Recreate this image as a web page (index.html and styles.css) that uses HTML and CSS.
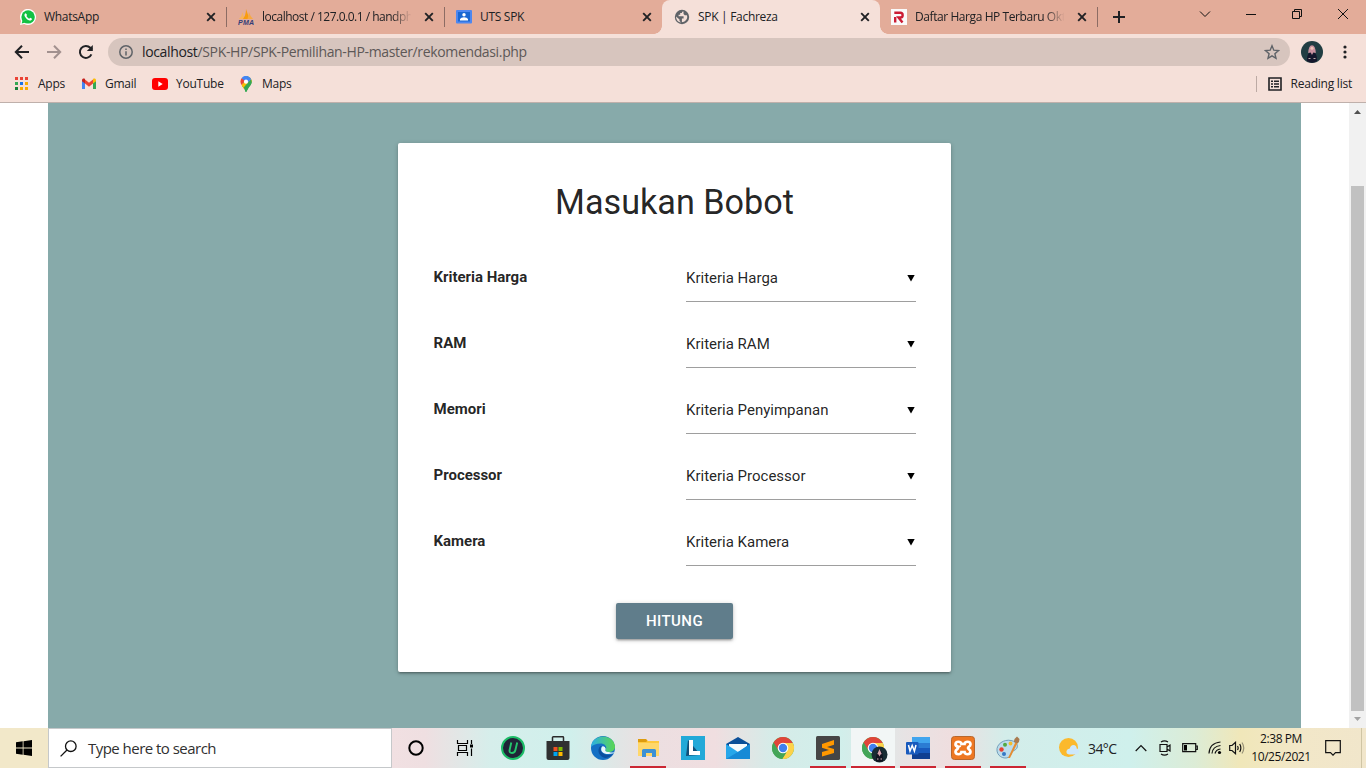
FILE: index.html
```html
<!DOCTYPE html>
<html lang="id">
<head>
<meta charset="utf-8">
<title>SPK | Fachreza</title>
<link rel="stylesheet" href="styles.css">
</head>
<body>
<svg class="defs" width="0" height="0" aria-hidden="true">
  <symbol id="close" viewBox="0 0 16 16"><path d="M4.2 4.2l7.6 7.6M11.8 4.2l-7.6 7.6" stroke="#202124" stroke-width="1.9" fill="none"/></symbol>
  <symbol id="chrome" viewBox="0 0 24 24">
    <circle cx="12" cy="12" r="11" fill="#4caf50"/>
    <path d="M2.5 6.5A11 11 0 0 1 21.5 6.5V7H12L7.4 14.6z" fill="#e0453a"/>
    <path d="M12 7h9.8A11 11 0 0 1 11.2 23l5.2-8.5z" fill="#fdd24a"/>
    <path d="M2.5 6.5l4.9 8.2L12 17h3L11.200 23A11 11 0 0 1 2.5 6.5z" fill="#43a558"/>
    <circle cx="12" cy="12" r="5.3" fill="#fff"/><circle cx="12" cy="12" r="4.2" fill="#3f80ee"/>
  </symbol>
</svg>
<div class="screen">
  <header class="tabstrip">
    <div class="tab divided">
      <svg class="fav" viewBox="0 0 16 16"><path d="M0 16l1.1-4A8 8 0 1 1 4.2 15z" fill="#fff"/><circle cx="8.1" cy="7.9" r="6.7" fill="#12c143"/><path d="M1.7 14.4l1-3.8 2.7 2.8z" fill="#12c143"/><path d="M5.8 4.3c-1.6.5-1.7 2-.8 3.5 1.1 1.900 2.700 3.200 4.500 3.700 1.300.3 2.400-.3 2.500-1.700L10.200 8.800l-1 1C8 9.300 6.900 8.200 6.400 7.100l.7-1z" fill="#fff"/></svg>
      <span class="title">WhatsApp</span><svg class="x"><use href="#close"/></svg>
    </div>
    <div class="tab divided">
      <svg class="fav" viewBox="0 0 16 16"><path d="M1 10Q4 7 4.500 3L6.500 10z" fill="#f7b35c"/><path d="M5 10Q8 6 8 0l3.500 10z" fill="#f89c0e"/><path d="M9.500 10L11 3q1 4 4 7z" fill="#f6a942"/><text x="0" y="15.500" class="pma" textLength="16">PMA</text></svg>
      <span class="title faded">localhost / 127.0.0.1 / handph</span><svg class="x"><use href="#close"/></svg>
    </div>
    <div class="tab">
      <svg class="fav" viewBox="0 0 16 16"><rect y="1" width="16" height="13.500" rx="1" fill="#4d87f0"/><rect x="2" y="3" width="12" height="9.500" fill="#1967d2"/><circle cx="8" cy="5.700" r="1.700" fill="#fff"/><path d="M4 11.500V10q1-1.700 4-1.700T12 10v1.500z" fill="#fff"/></svg>
      <span class="title">UTS SPK</span><svg class="x"><use href="#close"/></svg>
    </div>
    <div class="tab active">
      <svg class="fav" viewBox="0 0 16 16"><circle cx="8" cy="8" r="7.200" fill="#5f6368"/><path d="M9.500 2.500c-1.300 0-1.600.7-1.600 1.500H6.200v1.700H4.600v1.600h5v2.300h-1.700v3.600c2.800-.1 5.300-2.500 5.300-5.200 0-.6-.1-1.200-.3-1.700h-2.100l-1.300-1.200zM2 7.500l3.500 3v1.600l1.700 1.500C4 13.200 2 11 2 7.500z" fill="#f5e0d9"/></svg>
      <span class="title">SPK | Fachreza</span><svg class="x"><use href="#close"/></svg>
    </div>
    <div class="tab last divided">
      <svg class="fav" viewBox="0 0 16 16"><rect width="16" height="16" fill="#fafafa"/><path d="M4.200 13.500V8M3.300 3.800h6a2 2 0 0 1 0 4.700H7.500l4 5" stroke="#cc1c34" stroke-width="2.400" fill="none"/></svg>
      <span class="title faded">Daftar Harga HP Terbaru Okt</span><svg class="x"><use href="#close"/></svg>
    </div>
    <svg class="plus" viewBox="0 0 12 12"><path d="M6 0v12M0 6h12" stroke="#202124" stroke-width="2"/></svg>
    <div class="caption">
      <svg viewBox="0 0 12 12"><path d="M1 3.500l5 5 5-5" /></svg>
      <svg viewBox="0 0 12 12"><path d="M1 6.500h10"/></svg>
      <svg viewBox="0 0 12 12"><path d="M1.500 3.500h7v7h-7zM3.500 3.500v-2h7v7h-2"/></svg>
      <svg viewBox="0 0 12 12"><path d="M1 1l10 10M11 1L1 11"/></svg>
    </div>
  </header>

  <div class="toolbar">
    <svg class="nav" viewBox="0 0 16 16"><path d="M15 8H2M8 1.800L1.800 8 8 14.200" stroke="#202124"/></svg>
    <svg class="nav" viewBox="0 0 16 16"><path d="M1 8h13M8 1.800L14.200 8 8 14.200" stroke="#a2918f"/></svg>
    <svg class="nav" viewBox="0 0 16 16"><path d="M13.400 10.300A6 6 0 1 1 12.300 3.800L14 5.500" stroke="#202124"/><path d="M14.800 1v6h-6z" fill="#202124" stroke="none"/></svg>
    <div class="omnibox">
      <svg class="info" viewBox="0 0 14 14"><circle cx="7" cy="7" r="6.200"/><path d="M7 6.200v4.300M7 3.400v1.500"/></svg>
      <span class="url"><b>localhost</b>/SPK-HP/SPK-Pemilihan-HP-master/rekomendasi.php</span>
      <svg class="star" viewBox="0 0 16 16"><path d="M8 1.800l1.800 4.400 4.700.4-3.600 3.100 1.100 4.600L8 11.900l-4 2.400 1.100-4.600L1.500 6.600l4.700-.4z"/></svg>
    </div>
    <svg class="avatar" viewBox="0 0 22 22"><circle cx="11" cy="11" r="11" fill="#213d42"/><path d="M6 20q-.5-9 5-9t5 9q-5 3.500-10 0z" fill="#14162b"/><path d="M7.200 12q.3-7.500 3.800-7.800 3.500.3 3.800 7.800l-2.500-.5-1.300 2.500-1.300-2.500z" fill="#c9929f"/><circle cx="11" cy="7.300" r="1.500" fill="#efc5b7"/><path d="M7.500 17.500h2m3 0h2" stroke="#bda9a5"/></svg>
    <svg class="dots" viewBox="0 0 4 14"><circle cx="2" cy="2" r="1.600"/><circle cx="2" cy="7" r="1.600"/><circle cx="2" cy="12" r="1.600"/></svg>
  </div>

  <nav class="bookmarks">
    <svg class="apps" viewBox="0 0 13 13"><path d="M0 0h3v3H0zM5 0h3v3H5zM10 0h3v3h-3z" fill="#ea4335"/><path d="M0 5h3v3H0z" fill="#34a853"/><path d="M5 5h3v3H5z" fill="#1a73e8"/><path d="M10 5h3v3h-3zM5 10h3v3H5zM10 10h3v3h-3z" fill="#f9ab00"/><path d="M0 10h3v3H0z" fill="#188038"/></svg>
    <span class="bm-apps">Apps</span>
    <svg class="gmail" viewBox="0 0 14 12"><path d="M0 2.500V11h3V5z" fill="#4285f4"/><path d="M14 2.500V11h-3V5z" fill="#34a853"/><path d="M3 1.500L7 4.700l4-3.200v4L7 8.700 3 5.500z" fill="#ea4335"/><path d="M0 2.500C0 .5 1.800 0 3 1v4.500L0 3.300z" fill="#c5221f"/><path d="M14 2.500C14 .5 12.200 0 11 1v4.500l3-2.200z" fill="#fbbc04"/></svg>
    <span class="bm-gmail">Gmail</span>
    <svg class="yt" viewBox="0 0 16 12"><rect width="16" height="12" rx="3" fill="#f00"/><path d="M6.300 3.300v5.400L10.700 6z" fill="#fff"/></svg>
    <span class="bm-yt">YouTube</span>
    <svg class="maps" viewBox="0 0 12 16"><path d="M6 0a5.700 5.700 0 0 1 5.700 5.700C11.700 9 8 10.500 6.700 15.300q-.7 1.400-1.400 0C4.700 12.500 2 10 2 10z" fill="#34a853"/><path d="M1.500 9L8.700 1Q11.700 2.500 11.700 5.700L4 13z" fill="#fbbc04"/><path d="M6.300 8.500l4.600-5.300c1.600 3.300.3 5.400-1.900 8.100L6.700 15.300q-.7 1.400-1.400 0Q5 13 3.700 11.500z" fill="#34a853"/><path d="M1.500 2.200A5.700 5.700 0 0 1 8.700.7L4.500 6z" fill="#4285f4"/><path d="M8.700.7Q10.500 1.500 11.100 3.200L8 6.500 5.500 3.500z" fill="#4285f4"/><path d="M1.500 2.200L5 5.100 1.500 9Q-.6 5.500 1.500 2.200z" fill="#ea4335"/><circle cx="6" cy="5.700" r="2.100" fill="#fff"/></svg>
    <span class="bm-maps">Maps</span>
    <div class="reading">
      <svg viewBox="0 0 14 14"><path d="M1 1h12v12H1z" fill="none" stroke="#202124" stroke-width="1.600"/><path d="M3 4.200h2m1 0h5M3 7h2m1 0h5M3 9.800h2m1 0h5" stroke="#202124" stroke-width="1.500"/></svg>
      <span>Reading list</span>
    </div>
  </nav>

  <main class="viewport">
    <div class="page">
      <form class="card">
        <h4>Masukan Bobot</h4>
        <div class="row"><label>Kriteria Harga</label><div class="select"><span>Kriteria Harga</span><i></i></div></div>
        <div class="row"><label>RAM</label><div class="select"><span>Kriteria RAM</span><i></i></div></div>
        <div class="row"><label>Memori</label><div class="select"><span>Kriteria Penyimpanan</span><i></i></div></div>
        <div class="row"><label>Processor</label><div class="select"><span>Kriteria Processor</span><i></i></div></div>
        <div class="row"><label>Kamera</label><div class="select"><span>Kriteria Kamera</span><i></i></div></div>
        <button class="btn" type="button">HITUNG</button>
      </form>
    </div>
    <div class="scrollbar"><i class="up"></i><div class="thumb"></div><i class="down"></i></div>
  </main>

  <footer class="taskbar">
    <div class="start"><svg viewBox="0 0 16 16"><path d="M0 2.300L6.700 1.300V7.600H0zM7.500 1.200L16 0v7.600H7.500zM0 8.400h6.700v6.300L0 13.700zM7.500 8.400H16V16l-8.500-1.200z"/></svg></div>
    <div class="search"><svg viewBox="0 0 17 17"><circle cx="10.800" cy="6.200" r="5.300"/><path d="M7 10L.6 16.400"/></svg><span>Type here to search</span></div>
    <div class="sys"><svg viewBox="0 0 24 24"><circle cx="12" cy="12" r="6.700" fill="none" stroke="#000" stroke-width="2"/></svg></div>
    <div class="sys"><svg viewBox="0 0 24 24"><path d="M4.500 4v3.500h10V4M4.500 20v-3.500h10V20M5.500 9.500h8v5h-8zM18.500 4v4M18.500 12.500V20" fill="none" stroke="#000" stroke-width="1.200"/><path d="M17 8.500h3v3h-3z"/></svg></div>
    <div class="app"><svg viewBox="0 0 24 24"><circle cx="12" cy="12" r="11" fill="#202437" stroke="#1cbc67" stroke-width="2"/><path d="M10.300 6.500L8.600 14q-.5 3 2.300 3t3.500-3l1.800-7.500" fill="none" stroke="#24c56c" stroke-width="1.900"/></svg></div>
    <div class="app"><svg viewBox="0 0 24 24"><path d="M6.500 6V1.500Q6.500.800 7.300.800h9.400q.8 0 .8.700V6" fill="none" stroke="#2a2a2a" stroke-width="1.500"/><path d="M.5 5h23v17q0 2-2 2h-19q-2 0-2-2z" fill="#303030"/><path d="M7.500 11h4v4h-4z" fill="#f25022"/><path d="M12.500 11h4v4h-4z" fill="#7fba00"/><path d="M7.500 16h4v4h-4z" fill="#00a4ef"/><path d="M12.500 16h4v4h-4z" fill="#ffb900"/></svg></div>
    <div class="app"><svg viewBox="0 0 24 24"><defs><linearGradient id="eg" x1="0" x2="1"><stop stop-color="#2aaee5"/><stop offset="1" stop-color="#5bd750"/></linearGradient></defs><circle cx="12" cy="12" r="12" fill="#1470c4"/><path d="M0 11C1-3 23-3 24 10.500c0 4-3 5.500-6 5.500-3.500 0-4.500-1.500-3.200-3 1.500-2-1-5.500-5-5.500Q3 7.500 0 11z" fill="url(#eg)"/><path d="M9.500 10C5 14 8.500 21 14 22q4 0 8.500-4C18 20 11 19 9.700 14q-.5-2 1-4z" fill="#0b4f9f"/><path d="M11 10.500c-3 5 2.500 9.500 11.500 6.800l.8-1.300q-2 1-5.300 0c-3.500 0-4.500-1.500-3.200-3q-.8-3.500-3.800-2.500z" fill="#e8f8fa"/></svg></div>
    <div class="app open"><svg viewBox="0 0 24 24"><path d="M2 3h8l2 2h11v15H2z" fill="#ffc83d"/><path d="M2 3h8l1.300 2L10 6H2z" fill="#dd9b0e"/><path d="M2 7h21v13H2z" fill="#ffd76a"/><path d="M6 21v-6.500q0-1.500 1.500-1.500h11q1.500 0 1.500 1.500V21h-4v-4h-6v4z" fill="#3d91d5"/></svg></div>
    <div class="app"><svg viewBox="0 0 24 24"><path d="M0 0h24v24H0z" fill="#23a9d8"/><path d="M7 4L5 20l13-1v-2z" fill="#124f78"/><path d="M8 4h4v11h7v4H8z" fill="#fff"/></svg></div>
    <div class="app"><svg viewBox="0 0 24 24"><path d="M0 8L12 1l12 7v15H0z" fill="#0b4f98"/><path d="M3 8h18v9H3z" fill="#f6fafc"/><path d="M0 8l12 8 12-8v15H0z" fill="#27a7ea"/><path d="M0 23L14 14.700 24 8v15z" fill="#178ad6"/></svg></div>
    <div class="app"><svg><use href="#chrome"/></svg></div>
    <div class="app open"><svg viewBox="0 0 24 24"><rect width="24" height="24" rx="1.500" fill="#454545"/><path d="M6 8l12-4v4.700L11 11l7 2v4L6 20.500V16l7-2-7-2.200z" fill="#ff9800"/></svg></div>
    <div class="app open current"><svg viewBox="0 0 27 27"><use href="#chrome" width="24" height="24"/><circle cx="18.500" cy="18.500" r="8" fill="#182c33"/><path d="M15 25q0-10 3.500-11t3.500 11q-3.500 2-7 0z" fill="#101320"/><path d="M16.300 18l2.200-5 2.200 5-1.200.5-1 2-1-2z" fill="#d7a4ae"/><path d="M16 23h1.500m2 0H21" stroke="#d0b9b9"/></svg></div>
    <div class="app open"><svg viewBox="0 0 24 24"><path d="M6 1h18v6H6z" fill="#41a5ee"/><path d="M6 7h18v5H6z" fill="#2b7cd3"/><path d="M6 12h18v5H6z" fill="#185abd"/><path d="M6 17h18v6H6z" fill="#103f91"/><rect y="6" width="12.500" height="12.500" rx="1" fill="#185abd"/><path d="M2.500 9l1.500 6L6.200 9.500l2.200 5.500L10 9" stroke="#fff" stroke-width="1.500" fill="none"/></svg></div>
    <div class="app open"><svg viewBox="0 0 24 24"><rect x=".500" y=".500" width="23" height="23" rx="3" fill="#ee7722" stroke="#b8672d"/><path d="M9 9.500C9 11 4.500 11 4.500 8.200 4.500 5 10.500 5 10.500 8h3c0-3 6-3 6 .2 0 2.600-2.500 2.300-2.500 3.800s2.500 1.200 2.500 3.800c0 3.200-6 3.200-6 .2h-3c0 3-6 3-6-.2C4.500 13.200 7 13.500 7 12S4.500 10.800 4.500 8.200" fill="none" stroke="#fff" stroke-width="2.700"/></svg></div>
    <div class="app open"><svg viewBox="0 0 24 24"><path d="M1 15C0 8 8 3 15 4.500c8 1.500 8 8 3 10-3 1-2 3-4 5.500-3 4-12 2-13-5z" fill="#bcdcec" stroke="#739fba"/><circle cx="5.500" cy="13.500" r="2.200" fill="#e64131"/><circle cx="9" cy="8.800" r="2" fill="#54aa42"/><circle cx="14.500" cy="7.500" r="1.900" fill="#f3bc2e"/><circle cx="8" cy="18" r="2" fill="#3578c5"/><path d="M12 22L19.500 6l2 1L14 22z" fill="#e58d32"/><path d="M18 6q-.5-3 3-5.500L23.500 3q0 3-2 4.500z" fill="#a97b50"/></svg></div>

    <div class="tray">
      <svg class="weather" viewBox="0 0 20 20"><circle cx="9.500" cy="9.500" r="9.500" fill="#fbb92c"/><path d="M11 16.500h-1Q7 16 7.500 13q.7-2.500 3.300-2.500Q11.500 7 14.500 7q3 .3 3.200 3.500Q20 11 20 13.500q-.3 3-3 3z" fill="#cde8fb"/></svg>
      <span class="temp">34°C</span>
      <svg class="chev" viewBox="0 0 12 12"><path d="M.7 9L6 3.500 11.300 9"/></svg>
      <svg class="meet" viewBox="0 0 12 16"><path d="M1 4.500h7v7H1zM8 7l3-2v6L8 9M2 2Q5.500-.3 9 2M2 14q3.500 2.300 7 0"/></svg>
      <svg class="batt" viewBox="0 0 16 10"><path d="M.7.700h13v8h-13zM14 3h1.300v3.500H14"/><path d="M2 2h3v5.500H2z" fill="#000" stroke="none"/></svg>
      <svg class="wifi" viewBox="0 0 14 14"><path d="M1 12.500Q1.500 2 12.500 1M4 12.500Q4.500 5.500 12.500 4.500M7 12.500Q8 8.500 12.500 8"/><circle cx="11.500" cy="11.500" r="1.600" fill="#000" stroke="none"/></svg>
      <svg class="vol" viewBox="0 0 17 14"><path d="M.7 4.500H3L6.500 1.300v11.400L3 9.500H.7zM8.500 5q1.300 2 0 4M10.700 3q2.300 4 0 8"/><path d="M13 1.500q3.500 5.500 0 11" opacity=".4"/></svg>
      <div class="clock"><span>2:38 PM</span><span class="date">10/25/2021</span></div>
      <svg class="note" viewBox="0 0 16 16"><path d="M.7.700h14.600v12H10.500L8 15.200 5.500 12.700H.7z"/></svg>
      <div class="peek"></div>
    </div>
  </footer>
</div>
</body>
</html>
```
FILE: styles.css
```css
* { box-sizing: border-box; }
body { margin: 0; overflow: hidden; font-family: "Open Sans", "Noto Sans", sans-serif; font-size: 12px; color: #202124; }
svg { display: block; flex: none; }
.defs { position: absolute; }
.screen { width: 1366px; height: 768px; display: flex; flex-direction: column; }

.tabstrip { height: 34px; flex: none; display: flex; align-items: stretch; padding-left: 8px; background: #e3ac99; }
.tab { width: 218px; flex: none; display: flex; align-items: center; gap: 8px; padding: 0 7px 0 12px; position: relative; }
.last { width: 217px; padding-left: 11px; }
.divided::after { content: ""; position: absolute; right: -1px; top: 7px; width: 1px; height: 20px; background: #8c6c64; }
.active { background: #f5e0d9; border-radius: 8px 8px 0 0; }
.active::before, .active::after { content: ""; position: absolute; bottom: 0; width: 8px; height: 8px; }
.active::before { left: -8px; background: radial-gradient(circle at 0 0, #e3ac99 7.500px, #f5e0d9 8px); }
.active::after { right: -8px; background: radial-gradient(circle at 100% 0, #e3ac99 7.500px, #f5e0d9 8px); }
.fav { width: 16px; height: 16px; }
.pma { font: italic bold 7px "Liberation Sans", sans-serif; fill: #343c78; }
.title { flex: 1; white-space: nowrap; font-size: 12px; letter-spacing: -.300px; line-height: 18px; }
.faded { letter-spacing: -.500px; -webkit-mask-image: linear-gradient(90deg, #000 86%, transparent 99%); mask-image: linear-gradient(90deg, #000 86%, transparent 99%); }
.last .faded { letter-spacing: -.420px; }
.x { width: 16px; height: 16px; }
.plus { width: 12px; height: 12px; margin: 11px 0 0 16px; }
.caption { margin-left: auto; display: flex; gap: 34px; padding: 8px 17px 0 0; }
.caption svg { width: 12px; height: 12px; fill: none; stroke: #111; stroke-width: 1; }

.toolbar { height: 34px; flex: none; display: flex; align-items: center; padding: 2px 19px 0 14px; background: #f5e0d9; }
.nav { width: 16px; height: 16px; margin-right: 16px; fill: none; stroke-width: 2; }
.omnibox { flex: 1; height: 28px; margin: 0 11px 0 -2px; border-radius: 14px; background: #d7c5be; display: flex; align-items: center; padding: 0 10px 0 11px; }
.info { width: 14px; height: 14px; fill: none; stroke: #5f6368; stroke-width: 1.500; }
.url { flex: 1; margin-left: 9px; font-size: 14px; line-height: 20px; letter-spacing: -.350px; color: #5d5857; }
.url b { font-weight: 400; color: #202124; }
.star { width: 16px; height: 16px; fill: none; stroke: #5f6368; stroke-width: 1.400; }
.avatar { width: 22px; height: 22px; }
.dots { width: 4px; height: 14px; margin-left: 20px; fill: #202124; }

.bookmarks { height: 35px; flex: none; display: flex; align-items: center; padding: 0 14px 3px 15px; background: #f5e0d9; border-bottom: 1px solid #bfb0ab; font-size: 12px; letter-spacing: -.230px; line-height: 16px; white-space: nowrap; }
.bookmarks span { flex: none; }
.apps { width: 13px; height: 13px; }
.gmail { width: 14px; height: 12px; }
.yt { width: 16px; height: 12px; }
.maps { width: 12px; height: 16px; }
.bm-apps { width: 44px; margin-left: 10px; }
.bm-gmail { width: 47px; margin-left: 9px; }
.bm-yt { width: 64px; margin-left: 8px; }
.bm-maps { margin-left: 10px; }
.reading { margin-left: auto; display: flex; align-items: center; gap: 9px; padding-left: 11px; border-left: 1px solid #bcaaa4; }
.reading svg { width: 14px; height: 14px; }

.viewport { height: 625px; flex: none; display: flex; background: #fff; }
.page { width: 1253px; margin-left: 48px; padding-top: 40px; background: #87aaaa; }
.card { width: 553px; height: 529px; margin: 0 auto; padding: 36px 35px 0; display: flex; flex-direction: column; background: #fff; border-radius: 2px; box-shadow: 0 2px 2px 0 rgba(0,0,0,.14), 0 3px 1px -2px rgba(0,0,0,.12), 0 1px 5px 0 rgba(0,0,0,.2); font-family: Roboto, sans-serif; color: rgba(0,0,0,.87); }
.card h4 { margin: 0 0 32px; font-size: 34.200px; line-height: 46px; font-weight: 400; text-align: center; }
.row { height: 66px; display: flex; font-size: 15px; }
.row label { width: 253px; padding: 11px 0 0 .600px; line-height: 18px; font-weight: 700; letter-spacing: -.030px; }
.select { width: 230px; height: 45px; display: flex; align-items: center; justify-content: space-between; padding: 0 1px 2px 0; border-bottom: 1px solid #9e9e9e; }
.select i { width: 8px; height: 7px; background: #000; clip-path: polygon(0 0, 100% 0, 50% 100%); }
.btn { align-self: center; width: 117px; height: 36px; margin-top: 16px; padding: 0; border: 0; border-radius: 2px; background: #607d8b; color: #fff; font: 500 15px/36px Roboto, sans-serif; letter-spacing: .450px; box-shadow: 0 2px 2px 0 rgba(0,0,0,.14), 0 3px 1px -2px rgba(0,0,0,.12), 0 1px 5px 0 rgba(0,0,0,.2); }
.scrollbar { width: 17px; margin-left: auto; background: #f1f1f1; display: flex; flex-direction: column; align-items: center; }
.thumb { width: 13px; height: 525px; margin-top: 72px; background: #c1c1c1; }
.up, .down { width: 7px; height: 4px; margin-top: 7px; background: #505050; clip-path: polygon(50% 0, 100% 100%, 0 100%); }
.down { margin-top: 6px; background: #a3a3a3; clip-path: polygon(0 0, 100% 0, 50% 100%); }

.taskbar { height: 40px; flex: none; display: flex; background: linear-gradient(90deg, #f2e8c9 0, #f2e8c9 48px, #f1e0e2 392px, #efdfe1 425px, #d6eeeb 490px, #d0f0ec 570px, #ecdfe1 650px, #f0dee0 715px, #d6ebe8 770px, #d1efeb 840px, #e7e3e4 905px, #efdedf 950px, #d3edea 1005px, #cff0ec 1130px, #dcecd6 1195px, #f0e7b9 1240px, #f2e7c8 1300px, #f1e6cb 1366px); }
.start { width: 48px; display: grid; place-items: center; }
.start svg { width: 16px; height: 16px; }
.search { width: 344px; display: flex; align-items: center; gap: 11px; padding-left: 11px; background: #fff; border: 1px solid #c5c8ca; font-size: 15px; letter-spacing: -.530px; color: #303030; }
.search svg { width: 17px; height: 17px; fill: none; stroke: #111; stroke-width: 1.300; }
.sys { width: 49px; display: grid; place-items: center; }
.sys svg { margin-right: 2px; }
.app { width: 45px; display: grid; place-items: center; position: relative; }
.app svg, .sys svg { width: 24px; height: 24px; }
.open::after { content: ""; position: absolute; left: 5px; right: 4px; bottom: 0; height: 2px; background: #cb2633; }
.current { background: #f2f6f6; width: 44px; margin: 0 0 0 1px; }
.current::after { left: 0; right: 0; }
.app.current svg { width: 27px; height: 27px; margin: 3px 0 0 3px; }
.tray { flex: 1; display: flex; align-items: center; padding-left: 29px; }
.tray svg { fill: none; stroke: #111; stroke-width: 1.200; }
.tray .weather { width: 20px; height: 20px; stroke: none; }
.temp { width: 38px; margin-left: 9px; font-size: 14px; letter-spacing: -.600px; }
.chev { width: 12px; height: 12px; margin-left: 9px; }
.meet { width: 12px; height: 16px; margin-left: 12px; }
.batt { width: 16px; height: 10px; margin-left: 11px; }
.wifi { width: 14px; height: 14px; margin-left: 10px; }
.vol { width: 17px; height: 14px; margin-left: 7px; }
.clock { width: 70px; display: flex; flex-direction: column; align-items: center; line-height: 18px; font-size: 12px; letter-spacing: -.420px; color: #111; white-space: nowrap; }
.note { width: 16px; height: 16px; margin-left: 9px; }
.peek { width: 5px; height: 40px; margin-left: auto; border-left: 1px solid #cfc5a5; }
```
